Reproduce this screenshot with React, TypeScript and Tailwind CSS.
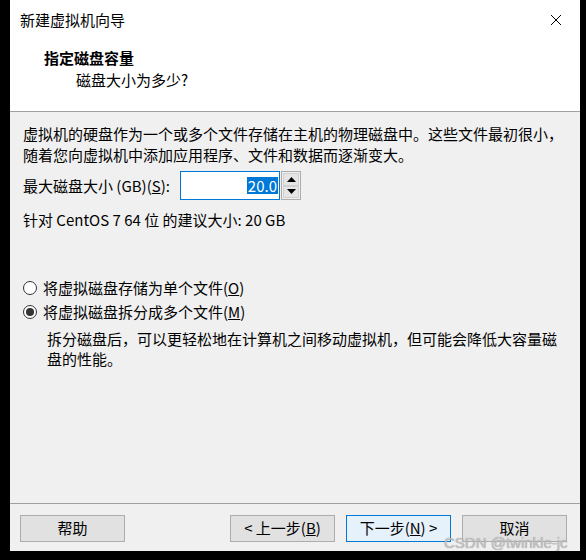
import React from "react";

const font = { fontFamily: '"Noto Sans CJK SC", "Noto Sans", sans-serif' };

function Radio({ checked }: { checked?: boolean }) {
  return (
    <span className="relative flex h-[14px] w-[14px] items-center justify-center rounded-full border border-[#333333] bg-white">
      {checked && <span className="h-[8px] w-[8px] rounded-full bg-[#333333]" />}
    </span>
  );
}

function Btn({ children, primary }: { children: React.ReactNode; primary?: boolean }) {
  return (
    <div
      className={
        "flex h-[27px] w-[105px] items-center justify-center border text-[15px] " +
        (primary ? "border-[#0078d7] bg-[#e5f1fb]" : "border-[#adadad] bg-[#e1e1e1]")
      }
    >
      {children}
    </div>
  );
}

export default function App() {
  return (
    <div className="relative h-[560px] w-[586px] overflow-hidden bg-black text-black" style={font}>
      <div className="ml-[10px] flex h-[551px] w-[570px] flex-col bg-[#f0f0f0]">
        {/* Title + header (white) */}
        <div className="h-[112px] border-b border-[#a0a0a0] bg-white">
          <div className="flex h-[40px] items-center justify-between pl-[10px] pr-[18px]">
            <span className="text-[15px] leading-[20px]">新建虚拟机向导</span>
            <svg width="12" height="12" viewBox="0 0 12 12">
              <path d="M1 1 L11 11 M11 1 L1 11" stroke="#000" strokeWidth="1" />
            </svg>
          </div>
          <div className="mt-[8px] pl-[34px] text-[15px] font-bold leading-[20px]">指定磁盘容量</div>
          <div className="mt-[2px] pl-[66px] text-[15px] leading-[20px]">磁盘大小为多少?</div>
        </div>

        {/* Body */}
        <div className="flex-1 pl-[13px] text-[15px]">
          <div className="mt-[11px] leading-[21px]">
            虚拟机的硬盘作为一个或多个文件存储在主机的物理磁盘中。这些文件最初很小，
            <br />
            随着您向虚拟机中添加应用程序、文件和数据而逐渐变大。
          </div>
          <div className="mt-[6px] flex h-[29px] items-center">
            <span className="w-[157px] leading-[21px]">
              最大磁盘大小 (GB)(<span className="underline">S</span>):
            </span>
            <div className="flex h-[29px] w-[100px] items-center justify-end border border-[#0078d7] bg-white pr-[1px]">
              <span className="bg-[#0078d7] px-[1px] leading-[17px] text-white">20.0</span>
            </div>
            <div className="ml-[1px] flex h-[29px] w-[20px] flex-col border border-[#acacac] bg-[#f0f0f0] p-[1px]">
              <div className="flex flex-1 items-center justify-center border border-[#d0d0d0] bg-[#e5e5e5]">
                <svg width="9" height="5" viewBox="0 0 9 5">
                  <path d="M0 5 L4.5 0 L9 5 Z" fill="#000" />
                </svg>
              </div>
              <div className="flex flex-1 items-center justify-center border border-[#d0d0d0] bg-[#e5e5e5]">
                <svg width="9" height="5" viewBox="0 0 9 5">
                  <path d="M0 0 L4.5 5 L9 0 Z" fill="#000" />
                </svg>
              </div>
            </div>
          </div>
          <div className="mt-[9px] leading-[21px]">针对 CentOS 7 64 位 的建议大小: 20 GB</div>

          <div className="mt-[47px] flex h-[21px] items-center gap-[6px]">
            <Radio />
            <span className="leading-[21px]">
              将虚拟磁盘存储为单个文件(<span className="underline">O</span>)
            </span>
          </div>
          <div className="mt-[3px] flex h-[21px] items-center gap-[6px]">
            <Radio checked />
            <span className="leading-[21px]">
              将虚拟磁盘拆分成多个文件(<span className="underline">M</span>)
            </span>
          </div>
          <div className="mt-[7px] pl-[24px] leading-[20px]">
            拆分磁盘后，可以更轻松地在计算机之间移动虚拟机，但可能会降低大容量磁
            <br />
            盘的性能。
          </div>
        </div>

        {/* Footer */}
        <div className="flex h-[48px] items-start border-t border-[#a0a0a0] pl-[10px] pr-[13px] pt-[11px]">
          <Btn>帮助</Btn>
          <div className="flex-1" />
          <div className="flex gap-[11px]">
            <Btn>&lt; 上一步(<span className="underline">B</span>)</Btn>
            <Btn primary>
              下一步(<span className="underline">N</span>) &gt;
            </Btn>
            <Btn>取消</Btn>
          </div>
        </div>
      </div>

      <div
        className="absolute left-[444px] top-[534px] text-[15px] leading-[18px] text-[#c4c4c4]"
        style={{ fontFamily: '"Liberation Sans", Arial, sans-serif', textShadow: "0 0 1px #888" }}
      >
        CSDN @twinkle-jc
      </div>
    </div>
  );
}
